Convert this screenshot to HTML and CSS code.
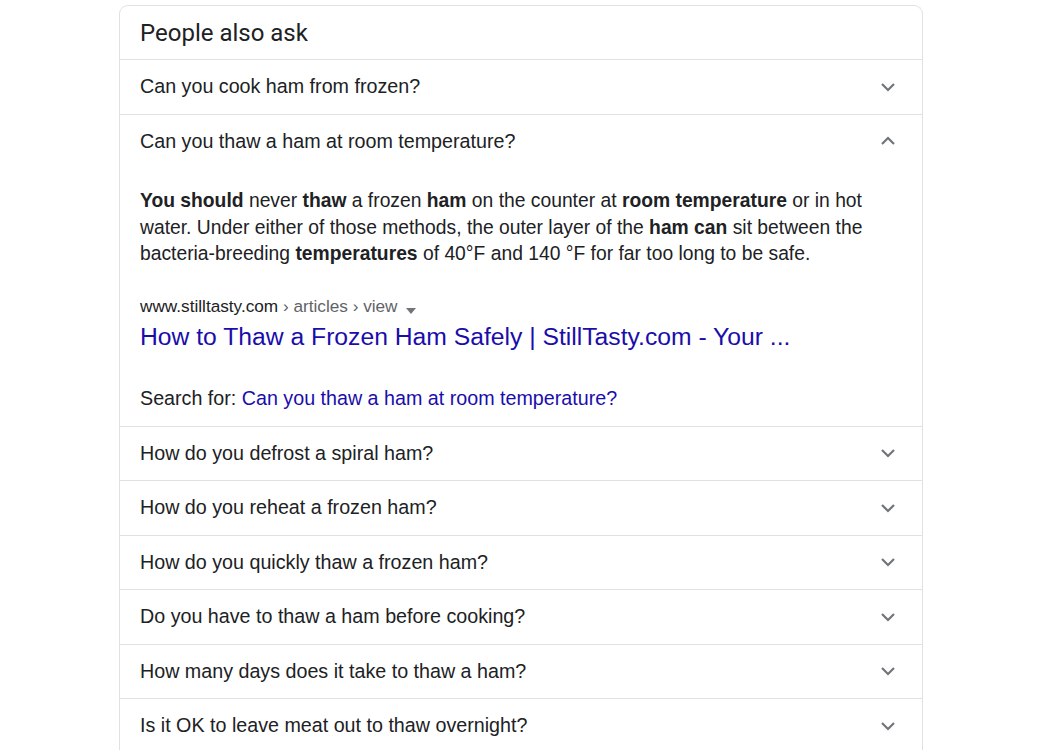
FILE: index.html
```html
<!DOCTYPE html>
<html lang="en">
<head>
  <meta charset="UTF-8">
  <meta name="viewport" content="width=device-width, initial-scale=1.0">
  <title>People also ask</title>
  <link rel="stylesheet" href="styles.css">
</head>
<body>
  <div class="paa">
    <div class="paa-header">People also ask</div>

    <div class="paa-row">
      <span>Can you cook ham from frozen?</span>
      <svg class="chevron" viewBox="0 0 24 24"><path d="M6 9l6 6 6-6"/></svg>
    </div>

    <div class="paa-item open">
      <div class="paa-row">
        <span>Can you thaw a ham at room temperature?</span>
        <svg class="chevron" viewBox="0 0 24 24"><path d="M6 15l6-6 6 6"/></svg>
      </div>
      <div class="answer">
        <p class="snippet"><b>You should</b> never <b>thaw</b> a frozen <b>ham</b> on the counter at <b>room temperature</b> or in hot water. Under either of those methods, the outer layer of the <b>ham can</b> sit between the bacteria-breeding <b>temperatures</b> of 40°F and 140 °F for far too long to be safe.</p>
        <div class="cite">
          www.stilltasty.com<span class="path"> › articles › view</span>
          <svg class="caret" viewBox="0 0 10 6"><path d="M0 0h10L5 6z"/></svg>
        </div>
        <a class="result-title" href="#">How to Thaw a Frozen Ham Safely | StillTasty.com - Your ...</a>
        <div class="search-for">Search for: <a href="#">Can you thaw a ham at room temperature?</a></div>
      </div>
    </div>

    <div class="paa-row">
      <span>How do you defrost a spiral ham?</span>
      <svg class="chevron" viewBox="0 0 24 24"><path d="M6 9l6 6 6-6"/></svg>
    </div>
    <div class="paa-row">
      <span>How do you reheat a frozen ham?</span>
      <svg class="chevron" viewBox="0 0 24 24"><path d="M6 9l6 6 6-6"/></svg>
    </div>
    <div class="paa-row">
      <span>How do you quickly thaw a frozen ham?</span>
      <svg class="chevron" viewBox="0 0 24 24"><path d="M6 9l6 6 6-6"/></svg>
    </div>
    <div class="paa-row">
      <span>Do you have to thaw a ham before cooking?</span>
      <svg class="chevron" viewBox="0 0 24 24"><path d="M6 9l6 6 6-6"/></svg>
    </div>
    <div class="paa-row">
      <span>How many days does it take to thaw a ham?</span>
      <svg class="chevron" viewBox="0 0 24 24"><path d="M6 9l6 6 6-6"/></svg>
    </div>
    <div class="paa-row">
      <span>Is it OK to leave meat out to thaw overnight?</span>
      <svg class="chevron" viewBox="0 0 24 24"><path d="M6 9l6 6 6-6"/></svg>
    </div>
  </div>
</body>
</html>
```

FILE: styles.css
```css
body {
  margin: 0;
  background-color: #fff;
  font-family: "Liberation Sans", Arial, sans-serif;
  color: #202124;
}
.paa {
  margin: 5px 0 0 119px;
  width: 802px;
  border: 1px solid #dfe1e5;
  border-bottom: none;
  border-radius: 9px 9px 0 0;
}
.paa-header {
  height: 53px;
  padding-left: 20px;
  display: flex;
  align-items: center;
  font-family: Roboto, "Liberation Sans", sans-serif;
  font-size: 24px;
  color: #202124;
  border-bottom: 1px solid #dfe1e5;
}
.paa-row {
  height: 53.5px;
  padding: 0 22px 0 20px;
  display: flex;
  align-items: center;
  justify-content: space-between;
  font-size: 19.7px;
  border-bottom: 1px solid #dfe1e5;
}
.paa-item.open .paa-row {
  border-bottom: none;
}
.paa-item.open {
  border-bottom: 1px solid #dfe1e5;
}
.chevron {
  width: 24px;
  height: 24px;
  fill: none;
  stroke: #70757a;
  stroke-width: 2.2;
}
.answer {
  padding: 20px 20px 16px 20px;
}
.snippet {
  margin: 0;
  font-size: 19.3px;
  line-height: 26.5px;
  color: #202124;
}
.cite {
  margin-top: 28px;
  font-size: 17.2px;
  line-height: 20px;
  color: #202124;
  display: flex;
  align-items: center;
}
.cite .path {
  color: #5f6368;
  white-space: pre;
}
.caret {
  width: 10px;
  height: 6px;
  margin: 10px 0 0 8px;
  fill: #70757a;
}
.result-title {
  display: block;
  margin-top: 6px;
  font-size: 24.7px;
  line-height: 30px;
  color: #1a0dab;
  text-decoration: none;
}
.search-for {
  margin-top: 34px;
  font-size: 19.7px;
  line-height: 24px;
}
.search-for a {
  color: #1a0dab;
  text-decoration: none;
}
```
